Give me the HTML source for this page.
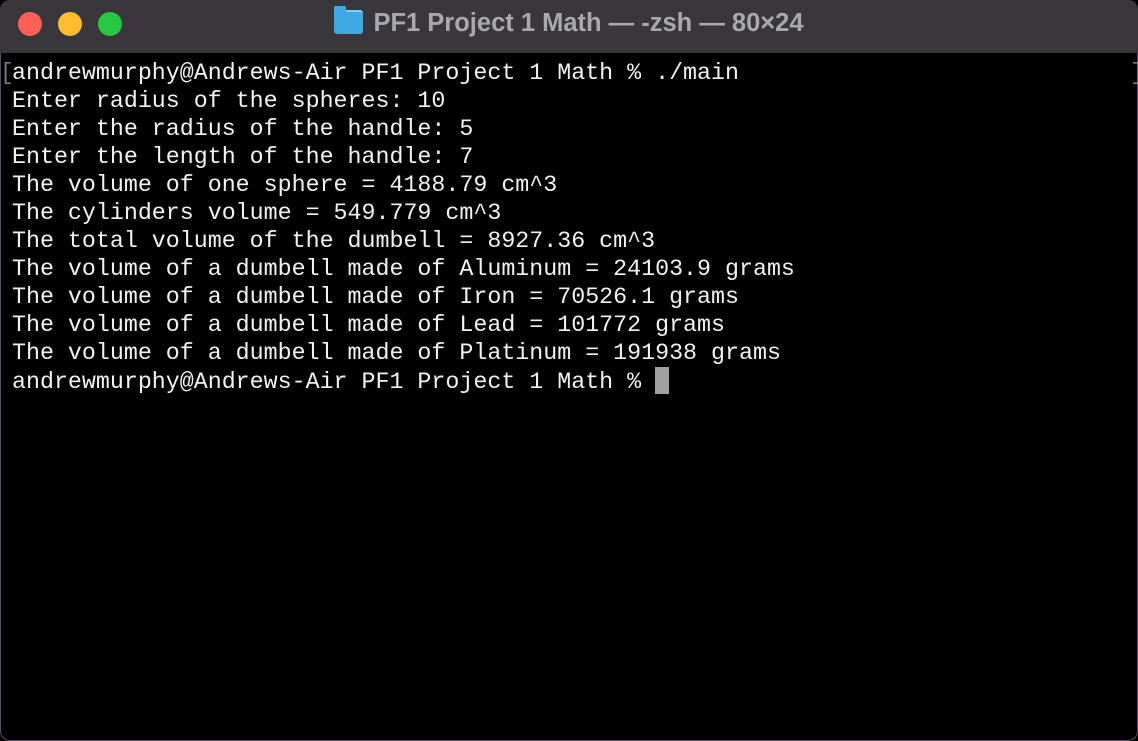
<!DOCTYPE html>
<html><head><style>
html,body{margin:0;padding:0;background:#000;width:1138px;height:741px;overflow:hidden}
.win{position:absolute;left:0;top:0;width:1138px;height:741px;background:#000;border-radius:10px;overflow:hidden;box-shadow:inset 0 0 0 1px #5a4a70}
.bar{position:absolute;left:0;top:0;width:1138px;height:53px;background:#39373c}
.dot{position:absolute;top:12px;width:24px;height:24px;border-radius:50%}
.title{position:absolute;top:9px;left:0;width:1138px;text-align:center;color:#a9a8ab;font:bold 25.5px "Liberation Sans",sans-serif}
.folder{display:inline-block;width:29px;height:22px;background:#3fa9e6;border-radius:3px;vertical-align:-3px;margin-right:10px;position:relative;border-top:2px solid #7fd0f8}
.folder:before{content:"";position:absolute;left:0;top:-6px;width:12px;height:6px;background:#3fa9e6;border-radius:2px 2px 0 0}
pre{position:absolute;left:12px;top:59px;margin:0;color:#f2f2f2;font:23.3px/28px "Liberation Mono",monospace}
.cur{display:inline-block;width:14px;height:27px;background:#a0a0a0;vertical-align:-6px}
.br{position:absolute;color:#777;font:23px/28px "Liberation Mono",monospace}
</style></head><body><div class="win">
<div class="bar">
<div class="dot" style="left:18px;background:#fe5f57"></div>
<div class="dot" style="left:58px;background:#febc2e"></div>
<div class="dot" style="left:98px;background:#28c840"></div>
<div class="title"><span class="folder"></span>PF1 Project 1 Math — -zsh — 80×24</div>
</div>
<div class="br" style="left:0;top:59px">[</div>
<div class="br" style="left:1130px;top:59px">]</div>
<pre>andrewmurphy@Andrews-Air PF1 Project 1 Math % ./main
Enter radius of the spheres: 10
Enter the radius of the handle: 5
Enter the length of the handle: 7
The volume of one sphere = 4188.79 cm^3
The cylinders volume = 549.779 cm^3
The total volume of the dumbell = 8927.36 cm^3
The volume of a dumbell made of Aluminum = 24103.9 grams
The volume of a dumbell made of Iron = 70526.1 grams
The volume of a dumbell made of Lead = 101772 grams
The volume of a dumbell made of Platinum = 191938 grams
andrewmurphy@Andrews-Air PF1 Project 1 Math % <span class="cur"></span></pre>
</div></body></html>
